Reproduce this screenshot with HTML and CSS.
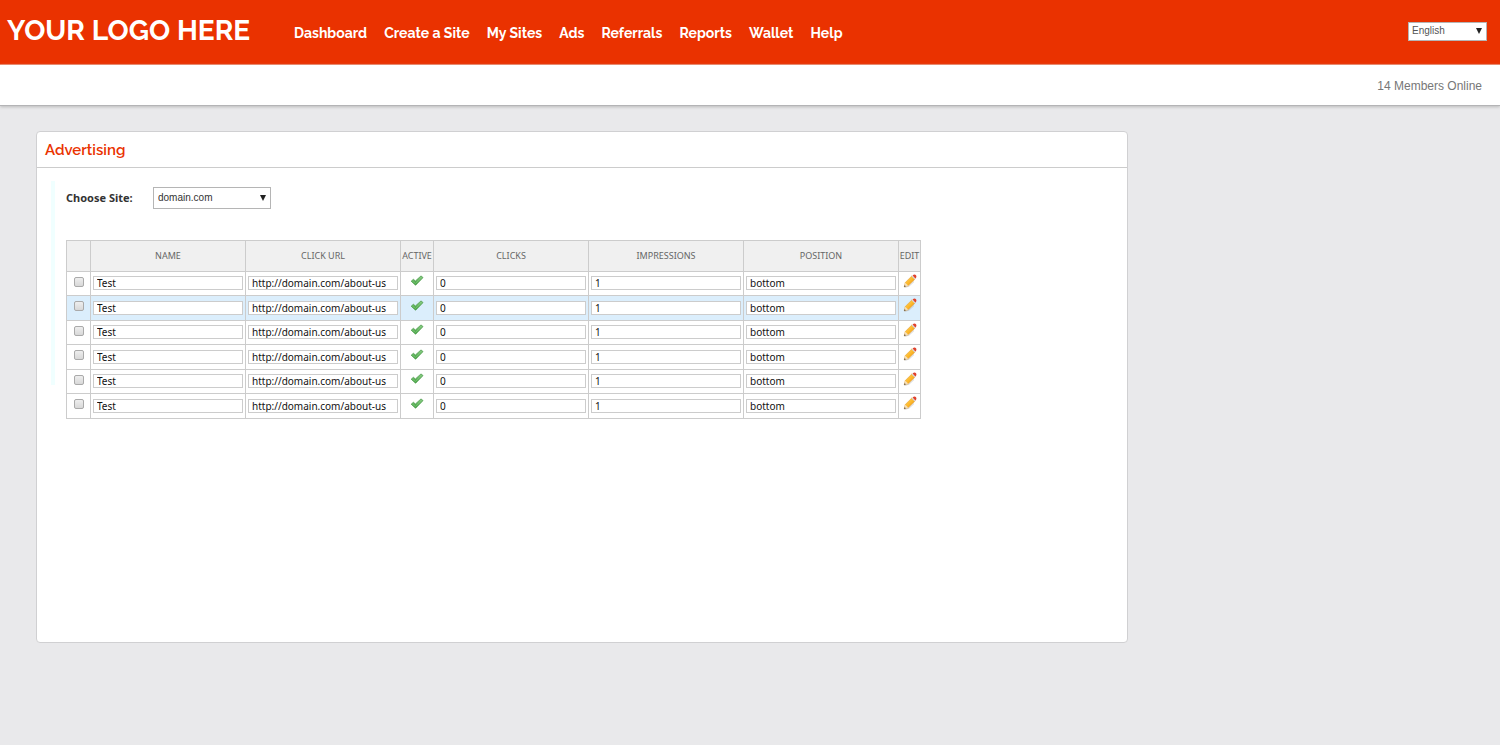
FILE: index.html
```html
<!DOCTYPE html>
<html lang="en">
<head>
<meta charset="utf-8">
<title>Advertising</title>
<link rel="stylesheet" href="styles.css">
</head>
<body>
<svg class="sprite" aria-hidden="true">
  <defs>
    <linearGradient id="g-check" x1="0" y1="0" x2="0" y2="1"><stop offset="0" stop-color="#8fd08a"/><stop offset="1" stop-color="#3c9c3a"/></linearGradient>
    <linearGradient id="g-pencil" x1="0" y1="0" x2="1" y2="1"><stop offset="0" stop-color="#ffdc6a"/><stop offset=".5" stop-color="#fdb92c"/><stop offset="1" stop-color="#d98010"/></linearGradient>
    <symbol id="check" viewBox="0 0 14 12">
      <path d="M1.2 6.2 3.4 4.3 5.4 6 11 .9 13 2.6 5.6 10.2Z" fill="url(#g-check)" stroke="#4a9a4a" stroke-width=".8" stroke-linejoin="round"/>
      <path d="M2.4 6.2 5.5 8.4 11.6 2.5" fill="none" stroke="#7cc876" stroke-width=".8"/>
    </symbol>
    <symbol id="pencil" viewBox="0 0 14 14">
      <path d="M1.5 13.4 6 12.2 11 7.5" stroke="#aaa" stroke-width=".9" fill="none" opacity=".6"/>
      <path d="M2.2 8.6 9 1.8 12.2 5 5.4 11.6 1.2 12.8Z" fill="url(#g-pencil)" stroke="#dc9a3c" stroke-width=".5"/>
      <path d="M2.2 8.8 5.2 11.6 1.2 12.8Z" fill="#f6dfb8"/>
      <path d="M1.7 11.2 2.8 12.3 1 13Z" fill="#333"/>
      <path d="M8.6 2.4 9.6 1.4 12.6 4.4 11.6 5.4Z" fill="#d5d5d5"/>
      <path d="M9.6 1.6 10.6.8Q12 .2 13 1.2 13.8 2.3 13.2 3.5L12.4 4.4Z" fill="#e0412c"/>
    </symbol>
  </defs>
</svg>

<header class="topbar">
  <a class="logo" href="#">YOUR LOGO HERE</a>
  <nav class="nav" aria-label="Main">
    <a href="#">Dashboard</a>
    <a href="#">Create a Site</a>
    <a href="#">My Sites</a>
    <a href="#">Ads</a>
    <a href="#">Referrals</a>
    <a href="#">Reports</a>
    <a href="#">Wallet</a>
    <a href="#">Help</a>
  </nav>
  <div class="pick pick-lang">
    <select aria-label="Language"><option>English</option></select>
    <span class="arrow" aria-hidden="true"></span>
  </div>
</header>
<div class="statusbar">14 Members Online</div>

<main class="page">
  <section class="panel">
    <h1 class="panel-title">Advertising</h1>
    <div class="panel-body">
      <div class="chooser">
        <label for="site">Choose Site:</label>
        <div class="pick pick-site">
          <select id="site"><option>domain.com</option></select>
          <span class="arrow" aria-hidden="true"></span>
        </div>
      </div>
      <table class="ads">
        <colgroup><col class="c-tick"><col><col><col class="c-active"><col><col><col><col class="c-edit"></colgroup>
        <thead>
          <tr><th></th><th>NAME</th><th>CLICK URL</th><th>ACTIVE</th><th>CLICKS</th><th>IMPRESSIONS</th><th>POSITION</th><th>EDIT</th></tr>
        </thead>
        <tbody id="rows"></tbody>
      </table>
    </div>
  </section>
</main>
<script src="rows.js"></script>
</body>
</html>
```
FILE: rows.js
```js
const ads = Array.from({ length: 6 }, () => ({
  name: "Test", url: "http://domain.com/about-us", clicks: 0, impressions: 1, position: "bottom"
}));
const field = (label, value) => `<td><input class="field" type="text" aria-label="${label}" value="${value}"></td>`;
document.getElementById("rows").innerHTML = ads.map((ad, i) => `
  <tr class="${i === 1 ? "selected" : ""}">
    <td class="mid"><input class="tick" type="checkbox" aria-label="Select ad ${i + 1}"></td>
    ${field("Name", ad.name)}
    ${field("Click URL", ad.url)}
    <td class="mid"><svg class="check" role="img" aria-label="Active"><use href="#check"/></svg></td>
    ${field("Clicks", ad.clicks)}
    ${field("Impressions", ad.impressions)}
    ${field("Position", ad.position)}
    <td class="mid"><button class="edit" type="button" aria-label="Edit ad ${i + 1}"><svg class="pencil"><use href="#pencil"/></svg></button></td>
  </tr>`).join("");
```
FILE: styles.css
```css
* { box-sizing: border-box; }

body {
  margin: 0;
  background: #e9e9eb;
  color: #333;
  font: 11px/16px "Noto Sans", "Open Sans", sans-serif;
}

.sprite { position: absolute; width: 0; height: 0; }

.topbar {
  display: flex;
  align-items: center;
  min-height: 65px;
  padding: 0 13px 2px 7px;
  background: #ea3200;
  border-bottom: 1px solid #f0805f;
}

.logo {
  width: 287px;
  color: #fff;
  font: 700 28px/36px Raleway, Lato, sans-serif;
  text-decoration: none;
  white-space: nowrap;
}

.nav { display: flex; flex: 1; gap: 17px; padding-top: 3px; }
.nav a {
  color: #fff;
  font: 700 14px/20px Raleway, Lato, sans-serif;
  text-decoration: none;
  white-space: nowrap;
}

.pick { position: relative; }
.pick select {
  display: block;
  width: 100%;
  height: 100%;
  padding: 0 4px;
  appearance: none;
  border: 1px solid #b5b5b5;
  border-radius: 0;
  background: #fff;
  color: #333;
  font: 10px/16px "Liberation Sans", Arial, sans-serif;
}
.arrow {
  position: absolute;
  top: calc(50% - 3px);
  right: 5px;
  border: 3px solid transparent;
  border-top: 6px solid #222;
  border-bottom: 0;
  pointer-events: none;
}
.pick-lang { width: 79px; height: 19px; }
.pick-lang select { padding: 0 3px; color: #555; }
.pick-site { width: 118px; height: 22px; }

.statusbar {
  min-height: 41px;
  padding: 13px 18px 11px;
  background: #fff;
  border-bottom: 1px solid #b4b4b6;
  box-shadow: 0 1px 3px #bbb;
  color: #777;
  font: 12px/16px "Liberation Sans", Arial, sans-serif;
  text-align: right;
}

.page { padding: 25px 36px; }

.panel {
  max-width: 1092px;
  min-height: 512px;
  background: #fff;
  border: 1px solid #d0d0d2;
  border-radius: 4px;
}
.panel-title {
  margin: 0;
  padding: 8px 8px 7px;
  border-bottom: 1px solid #ccc;
  color: #ea3200;
  font: 600 15px/20px Raleway, Lato, sans-serif;
}
.panel-body {
  padding: 19px 29px;
  background: linear-gradient(#f0ffff, #f0ffff) 14px 13px / 4px 204px no-repeat;
}

.chooser { display: flex; align-items: center; margin-bottom: 31px; }
.chooser label { width: 87px; font-weight: 700; }

.ads {
  width: 100%;
  max-width: 855px;
  table-layout: fixed;
  border-collapse: collapse;
}
.c-tick { width: 24px; }
.c-active { width: 33px; }
.c-edit { width: 22px; }
.ads th, .ads td { padding: 0 2px; border: 1px solid #ccc; }
.ads td { padding-bottom: 1px; }
.ads th {
  height: 31px;
  padding: 0;
  background: #f0f0f0;
  color: #666;
  font-size: 9px;
  font-weight: 400;
}
.ads td { height: 24px; }
.ads tr:nth-child(even) td { height: 25px; }
.ads .selected { background: #dbeefc; }
.ads .mid { padding: 0 0 6px; line-height: 12px; text-align: center; }
.mid > * { vertical-align: middle; }

.field {
  display: block;
  width: 100%;
  height: 14px;
  padding: 0 3px;
  border: 1px solid #ccc;
  background: #fff;
  color: #111;
  font: 10px/12px "Noto Sans", "Open Sans", sans-serif;
}
.tick {
  width: 10px;
  height: 10px;
  margin: 0;
  appearance: none;
  border: 1px solid #aaa;
  border-radius: 2px;
  background: linear-gradient(#eee, #d8d8d8);
}
.check { width: 14px; height: 12px; }
.edit { display: inline-flex; padding: 0; border: 0; background: none; }
.pencil { width: 14px; height: 14px; }
```
